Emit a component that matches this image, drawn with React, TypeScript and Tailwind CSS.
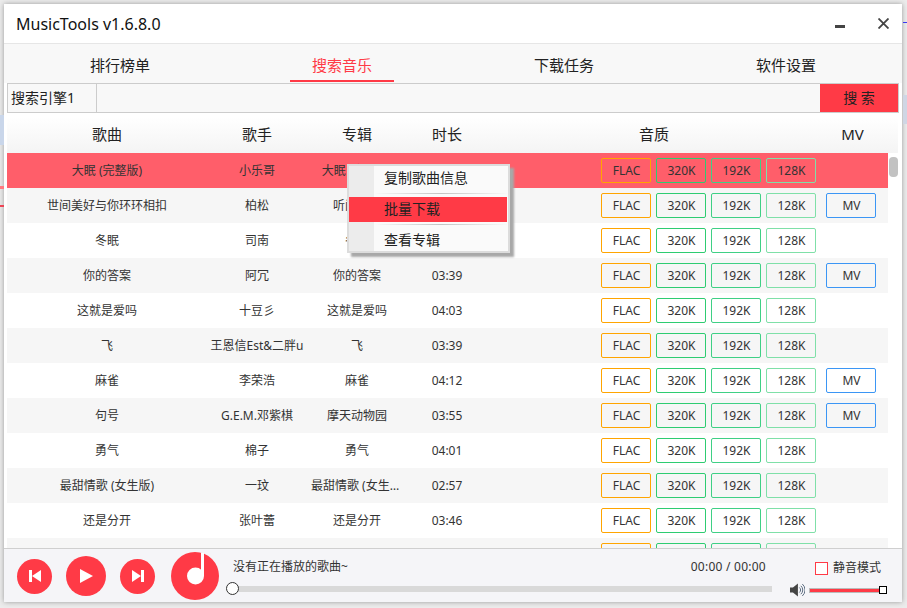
import { Fragment } from 'react';

const FONT = "font-['Noto_Sans','Noto_Sans_CJK_SC',sans-serif]";

type Song = { name: string; artist: string; album: string; time: string; mv?: boolean };

const SONGS: Song[] = [
  { name: '大眠 (完整版)', artist: '小乐哥', album: '大眠 (完整版)', time: '' },
  { name: '世间美好与你环环相扣', artist: '柏松', album: '听闻余生', time: '', mv: true },
  { name: '冬眠', artist: '司南', album: '冬眠', time: '' },
  { name: '你的答案', artist: '阿冗', album: '你的答案', time: '03:39', mv: true },
  { name: '这就是爱吗', artist: '十豆彡', album: '这就是爱吗', time: '04:03' },
  { name: '飞', artist: '王恩信Est&二胖u', album: '飞', time: '03:39' },
  { name: '麻雀', artist: '李荣浩', album: '麻雀', time: '04:12', mv: true },
  { name: '句号', artist: 'G.E.M.邓紫棋', album: '摩天动物园', time: '03:55', mv: true },
  { name: '勇气', artist: '棉子', album: '勇气', time: '04:01' },
  { name: '最甜情歌 (女生版)', artist: '一玟', album: '最甜情歌 (女生版)', time: '02:57' },
  { name: '还是分开', artist: '张叶蕾', album: '还是分开', time: '03:46' },
  { name: '', artist: '', album: '', time: '' },
];

const TABS = ['排行榜单', '搜索音乐', '下载任务', '软件设置'];

const QUALITY = [
  { label: 'FLAC', cls: 'border-[#ffa500]' },
  { label: '320K', cls: 'border-[#2ecc71]' },
  { label: '192K', cls: 'border-[#3fd085]' },
  { label: '128K', cls: 'border-[#7fe0a8]' },
];

function TagButton({ label, cls }: { label: string; cls: string }) {
  return (
    <div className={`w-[50px] h-[25px] shrink-0 flex items-center justify-center pl-px rounded-[2px] border text-xs text-[#333] ${cls}`}>
      {label}
    </div>
  );
}

function SongRow({ song, index }: { song: Song; index: number }) {
  const bg = index === 0 ? 'bg-[#ff5e6a]' : index % 2 === 1 ? 'bg-[#f6f6f6]' : 'bg-white';
  return (
    <div className={`h-[35px] shrink-0 flex items-center text-xs text-[#333] ${bg}`}>
      <div className="w-[200px] text-center truncate">{song.name}</div>
      <div className="w-[100px] text-center truncate">{song.artist}</div>
      <div className="w-[100px] px-1 text-center truncate">{song.album}</div>
      <div className="w-[80px] text-center">{song.time}</div>
      <div className="ml-[114px] flex gap-[5px]">
        {QUALITY.map(q => <TagButton key={q.label} label={song.name ? q.label : ''} cls={q.cls} />)}
      </div>
      {song.mv && (
        <div className="ml-[10px]">
          <TagButton label="MV" cls="border-[#3b96f5]" />
        </div>
      )}
    </div>
  );
}

function ContextMenu() {
  const items = ['复制歌曲信息', '批量下载', '查看专辑'];
  return (
    <div className="absolute left-[347px] top-[164px] w-[163px] h-[89px] bg-[#fafafa] border-2 border-[#dcdcdc] shadow-[4px_4px_2px_#a8a8a8] flex flex-col text-sm text-[#222]">
      {items.map((item, i) => (
        <Fragment key={item}>
          {i > 0 && (
            <div className="h-[6px] shrink-0 flex">
              <div className="w-[25px] bg-[#ececec]" />
              <div className="flex-1 mt-[2px]">
                <div className="h-px bg-gradient-to-r from-[#fafafa] via-[#c4c4c4] to-[#fafafa]" />
              </div>
            </div>
          )}
          <div className={`flex items-center ${i === 2 ? 'flex-1' : 'h-[25px]'} ${i === 1 ? 'bg-[#ff3a46] mr-px' : ''}`}>
            <div className={`w-[25px] self-stretch ${i === 1 ? '' : 'bg-[#ececec]'}`} />
            <span className={`ml-[10px] ${i === 2 ? '' : 'mb-[2px]'}`}>{item}</span>
          </div>
        </Fragment>
      ))}
    </div>
  );
}

function PrevIcon() {
  return (
    <svg width="12" height="12" viewBox="0 0 12 12" fill="#fff">
      <rect x="0" y="0" width="3" height="12" />
      <path d="M3 6 12 0v12z" />
    </svg>
  );
}

function NextIcon() {
  return (
    <svg width="12" height="12" viewBox="0 0 12 12" fill="#fff">
      <path d="M0 0l9 6-9 6z" />
      <rect x="9" y="0" width="3" height="12" />
    </svg>
  );
}

function Player() {
  return (
    <div className="h-[54px] shrink-0 border-t border-[#cfcfcf] bg-[#f5f5f8] flex items-start">
      <div className="ml-[13px] mt-[7px] flex items-center">
        <div className="w-[35px] h-[35px] rounded-full bg-[#ff3a46] flex items-center justify-center"><PrevIcon /></div>
        <div className="ml-[14px] w-[40px] h-[40px] rounded-full bg-[#ff3a46] flex items-center justify-center">
          <svg width="13" height="14" viewBox="0 0 13 14" fill="#fff"><path d="M0 0l13 7-13 7z" /></svg>
        </div>
        <div className="ml-[14px] w-[35px] h-[35px] rounded-full bg-[#ff3a46] flex items-center justify-center"><NextIcon /></div>
      </div>
      <svg className="ml-[16px] mt-[3px]" width="48" height="48" viewBox="0 0 48 48">
        <circle cx="24" cy="24" r="24" fill="#ff3a46" />
        <circle cx="24.5" cy="24" r="8.5" fill="#fff" />
        <rect x="30" y="1" width="3" height="23" fill="#fff" />
      </svg>
      <div className="ml-[7px] w-[546px] flex flex-col">
        <div className="mt-[9px] h-[18px] pl-[7px] pr-[6px] flex items-center justify-between text-xs text-[#333]">
          <span>没有正在播放的歌曲~</span>
          <span className="tracking-[0.25px]">00:00 / 00:00</span>
        </div>
        <div className="mt-[6px] flex items-center">
          <div className="relative z-10 w-[13px] h-[13px] rounded-full bg-white border border-[#333] shrink-0" />
          <div className="-ml-[7px] w-[540px] h-[6px] bg-[#d9d9d9]" />
        </div>
      </div>
      <div className="ml-[18px] w-[97px] flex flex-col">
        <div className="mt-[11px] pl-[25px] flex items-center text-xs text-[#333]">
          <div className="w-[13px] h-[13px] border border-[#ff3a46] bg-white" />
          <span className="ml-[5px]">静音模式</span>
        </div>
        <div className="mt-[7px] flex items-center">
          <svg width="15" height="14" viewBox="0 0 15 14" fill="none">
            <path d="M0 4.5h3L8 .5v13l-5-4H0z" fill="#444" />
            <path d="M9.5 4.5a3.2 3.2 0 0 1 0 5M11 2.8a5.6 5.6 0 0 1 0 8.4M12.5 1a8 8 0 0 1 0 12" stroke="#5a6b80" strokeWidth="1" />
          </svg>
          <div className="ml-[4px] w-[72px] h-[5px] bg-[#ff3a46] border-y border-l border-[#bbb]" />
          <div className="w-[8px] h-[8px] border border-black bg-white -ml-px" />
        </div>
      </div>
    </div>
  );
}

export default function App() {
  return (
    <div className={`relative w-[907px] h-[608px] overflow-hidden bg-[#ececec] pt-1 pl-1 ${FONT}`}>
      {/* bits of the desktop showing behind the window */}
      <div className="absolute left-0 top-[115px] w-[4px] h-[30px] bg-[#c9d6ea]" />
      <div className="absolute left-0 top-[186px] w-[4px] h-[3px] bg-[#ff7a80]" />
      <div className="absolute left-0 top-[205px] w-[4px] h-[2px] bg-[#e45]" />
      <div className="absolute right-0 top-[22px] w-[4px] h-px bg-[#3a3af0]" />
      <div className="absolute right-0 top-[95px] w-[4px] h-[29px] bg-[#cfd6e4]" />

      <div className="w-[898px] h-[598px] bg-white flex flex-col shadow-[0_0_5px_#999]">
        <div className="h-[40px] shrink-0 border-b border-[#e6e6e6] flex items-center pl-[12px] pr-[13px]">
          <span className="text-base text-[#111]">MusicTools v1.6.8.0</span>
          <div className="ml-auto w-[10px] h-[3px] mt-[6px] bg-[#444]" />
          <svg className="ml-[33px]" width="11" height="11" viewBox="0 0 11 11" stroke="#444" strokeWidth="1.8">
            <path d="M0.5 0.5l10 10M10.5 0.5l-10 10" />
          </svg>
        </div>

        <div className="relative h-[39px] shrink-0 bg-[#f8f8f8] px-[5px] grid grid-cols-4 text-[15px] text-[#222]">
          {TABS.map((t, i) => (
            <div key={t} className="flex flex-col items-center">
              <span className={`mt-[10px] ${i === 1 ? 'text-[#ff3a46]' : ''}`}>{t}</span>
              {i === 1 && <div className="mt-auto w-[104px] h-[2px] mb-[1px] bg-[#ff3a46]" />}
            </div>
          ))}
        </div>

        <div className="ml-[3px] w-[892px] h-[30px] shrink-0 border border-[#ccc] bg-[#f8f8f8] flex text-sm text-[#222]">
          <div className="w-[89px] border-r border-[#ccc] pl-[3px] flex items-center">搜索引擎1</div>
          <div className="ml-auto w-[78px] bg-[#ff3a46] flex items-center justify-center">搜 索</div>
        </div>

        <div className="mt-[4px] ml-[3px] w-[891px] h-[36px] pb-[2px] shrink-0 flex items-center bg-gradient-to-b from-white to-[#f4f4f4] text-[15px] text-[#222]">
          <div className="w-[200px] text-center">歌曲</div>
          <div className="w-[100px] text-center">歌手</div>
          <div className="w-[100px] text-center">专辑</div>
          <div className="w-[80px] text-center">时长</div>
          <div className="w-[334px] text-center">音质</div>
          <div className="w-[63px] text-center">MV</div>
        </div>

        <div className="flex-1 min-h-0 ml-[3px] flex overflow-hidden">
          <div className="w-[881px] flex flex-col">
            {SONGS.map((s, i) => <SongRow key={i} song={s} index={i} />)}
          </div>
          <div className="ml-px w-[9px] pt-[4px]">
            <div className="h-[20px] rounded-[4px] bg-[#c2c2c2]" />
          </div>
        </div>

        <Player />
      </div>

      <ContextMenu />
    </div>
  );
}
